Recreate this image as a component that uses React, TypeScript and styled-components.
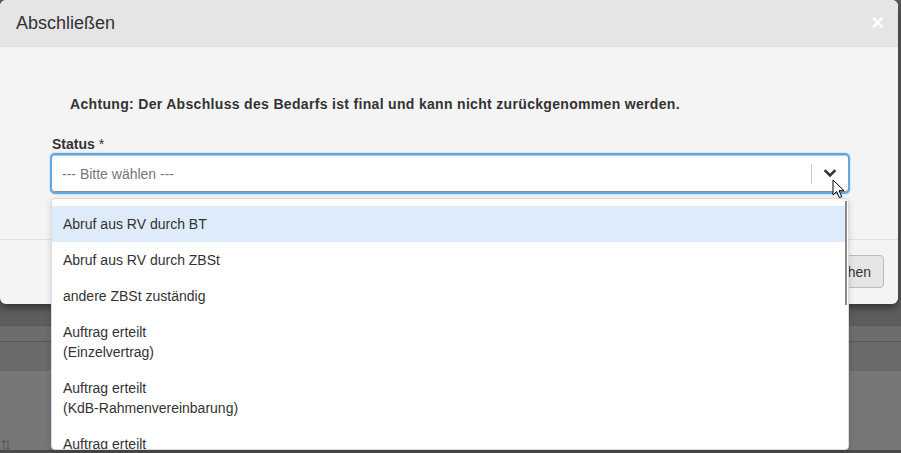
import React from 'react';
import styled, {createGlobalStyle} from 'styled-components';

const GlobalStyle = createGlobalStyle`
    html, body {
        margin: 0;
        padding: 0;
        overflow: hidden;
    }

    body {
        font-family: "Liberation Sans", Arial, sans-serif;
        color: #333;
        background-color: #777;
    }

    * {
        box-sizing: border-box;
    }
`;

const Screen = styled.div`
    position: relative;
    width: 901px;
    height: 453px;
    overflow: hidden;
`;

// page behind the modal, already dimmed by the backdrop
const Backdrop = styled.div`
    display: flex;
    flex-direction: column;
    background-color: #777;
`;

const BackdropTop = styled.div`
    height: 325px;
    flex-shrink: 0;
    background-color: #5d5d5d;
`;

const BackdropBand = styled.div<{$height: number; $bg: string}>`
    height: ${p => p.$height}px;
    flex-shrink: 0;
    background-color: ${p => p.$bg};
    border-top: 1px solid #575757;
`;

const BackdropContent = styled.div`
    height: 79px;
    flex-shrink: 0;
    padding: 68px 0 0 0;
    background-color: #777;
    color: #5c5c5c;
    font-size: 14px;
    line-height: 12px;
`;

const BackdropTableHead = styled.div`
    height: 24px;
    flex-shrink: 0;
    display: grid;
    grid-template-columns: 262px 363px 1fr;
    padding-top: 1px;
    background-color: #4a4a4a;
    color: #2a2a2a;
    font-size: 14px;
    font-weight: 700;
    line-height: 22px;
`;

const Modal = styled.div`
    position: absolute;
    top: 0;
    left: 0;
    width: 898px;
    background-color: #f4f4f4;
    border-radius: 6px;
    box-shadow: 0 3px 9px rgba(0, 0, 0, 0.5);
`;

const ModalHeader = styled.div`
    height: 47px;
    padding: 0 14px 0 16px;
    display: flex;
    align-items: center;
    justify-content: space-between;
    background-color: #e5e5e5;
    border-bottom: 1px solid #e2e2e2;
    border-radius: 6px 6px 0 0;
`;

const ModalTitle = styled.h4`
    margin: 0;
    font-size: 18px;
    font-weight: 400;
    color: #333;
`;

const CloseButton = styled.button`
    border: 0;
    padding: 0;
    background: none;
    color: #fff;
    font-family: "Liberation Sans", Arial, sans-serif;
    font-size: 22px;
    font-weight: 700;
    line-height: 1;
    cursor: pointer;
`;

const ModalBody = styled.div`
    padding: 48px 48px 45px 50px;
`;

const Warning = styled.p`
    margin: 0 0 22px 20px;
    font-size: 14px;
    font-weight: 700;
    line-height: 18px;
    letter-spacing: 0.32px;
    color: #333;
`;

const Label = styled.label`
    display: block;
    padding-left: 2px;
    font-size: 14px;
    font-weight: 700;
    line-height: 18px;
    color: #333;
`;

const Required = styled.span`
    font-weight: 400;
`;

const SelectWrap = styled.div`
    position: relative;
`;

const SelectBox = styled.div`
    height: 41px;
    display: flex;
    align-items: center;
    border: 2px solid #5fa8e3;
    border-radius: 5px;
    background-color: #fff;
    box-shadow: inset 0 -1px 0 #8c8c8c, inset 0 1px 0 #b5c8d8, 0 0 2px rgba(95, 168, 227, 0.6);
`;

const Placeholder = styled.span`
    flex: 1;
    padding-left: 10px;
    font-size: 14px;
    color: #777;
`;

const Divider = styled.span`
    width: 1px;
    height: 20px;
    background-color: #ccc;
`;

const ChevronButton = styled.span`
    width: 36px;
    display: flex;
    align-items: center;
    justify-content: center;
    color: #333;
`;

const Menu = styled.div`
    position: absolute;
    top: calc(100% + 4px);
    left: 1px;
    right: 1px;
    background-color: #fff;
    border: 1px solid #dcdcdc;
    border-radius: 4px;
    box-shadow: 0 2px 6px rgba(0, 0, 0, 0.15);
`;

const OptionList = styled.ul`
    max-height: 250px;
    margin: 0;
    padding: 7px 3px 0 0;
    list-style: none;
    overflow: hidden;
`;

const ScrollThumb = styled.div`
    position: absolute;
    top: 2px;
    right: 1px;
    width: 2px;
    height: 104px;
    background-color: #8a8a8a;
`;

const Option = styled.li<{$active?: boolean}>`
    padding: 8px 11px;
    font-size: 14px;
    line-height: 20px;
    color: #333;
    white-space: pre-line;
    background-color: ${p => (p.$active ? '#deebfb' : 'transparent')};
`;

const ModalFooter = styled.div`
    padding: 15px 14px 16px;
    display: flex;
    justify-content: flex-end;
    border-top: 1px solid #e0e0e0;
`;

const Button = styled.button`
    height: 33px;
    padding: 0 12px;
    font-family: "Liberation Sans", Arial, sans-serif;
    font-size: 14px;
    color: #333;
    background-color: #e6e6e6;
    border: 1px solid #bcbcbc;
    border-radius: 4px;
`;

const Pointer = styled.svg`
    position: absolute;
    left: 832px;
    top: 179px;
    pointer-events: none;
`;

const options = [
    'Abruf aus RV durch BT',
    'Abruf aus RV durch ZBSt',
    'andere ZBSt zuständig',
    'Auftrag erteilt\n(Einzelvertrag)',
    'Auftrag erteilt\n(KdB-Rahmenvereinbarung)',
    'Auftrag erteilt\n(Rahmenvertrag)',
    'Bedarf entfallen',
    'Bedarf zurückgezogen',
    'keine Angebote eingegangen',
    'Vergabe aufgehoben',
    'Sonstiges',
];

const ChevronDown = () => (
    <svg width="14" height="9" viewBox="0 0 14 9">
        <polyline points="2.5,2 7,6.5 11.5,2" fill="none" stroke="currentColor" strokeWidth="2.5" strokeLinecap="square" />
    </svg>
);

const App = () => {
    return (
        <>
            <GlobalStyle />
            <Screen>
                <Backdrop>
                    <BackdropTop />
                    <BackdropBand $height={16} $bg="#6d6d6d" />
                    <BackdropBand $height={30} $bg="#6a6a6a" />
                    <BackdropContent>⇅</BackdropContent>
                    <BackdropTableHead>
                        <span />
                        <span>E-Mail ▾</span>
                        <span>Telefon ▾</span>
                    </BackdropTableHead>
                </Backdrop>

                <Modal>
                    <ModalHeader>
                        <ModalTitle>Abschließen</ModalTitle>
                        <CloseButton>×</CloseButton>
                    </ModalHeader>

                    <ModalBody>
                        <Warning>
                            Achtung: Der Abschluss des Bedarfs ist final und kann nicht zurückgenommen werden.
                        </Warning>
                        <Label>
                            Status <Required>*</Required>
                        </Label>
                        <SelectWrap>
                            <SelectBox>
                                <Placeholder>--- Bitte wählen ---</Placeholder>
                                <Divider />
                                <ChevronButton>
                                    <ChevronDown />
                                </ChevronButton>
                            </SelectBox>
                            <Menu>
                                <OptionList>
                                    {options.map((o, i) => (
                                        <Option key={o} $active={i === 0}>
                                            {o}
                                        </Option>
                                    ))}
                                </OptionList>
                                <ScrollThumb />
                            </Menu>
                        </SelectWrap>
                    </ModalBody>

                    <ModalFooter>
                        <Button>Abbrechen</Button>
                    </ModalFooter>
                </Modal>

                <Pointer width="14" height="20" viewBox="0 0 14 20">
                    <path
                        d="M1 1 L1 16 L4.6 12.6 L7.4 18.6 L9.8 17.6 L7 11.7 L12 11.7 Z"
                        fill="#fff"
                        stroke="#000"
                        strokeWidth="1"
                        strokeLinejoin="round"
                    />
                </Pointer>
            </Screen>
        </>
    );
};

export default App;
